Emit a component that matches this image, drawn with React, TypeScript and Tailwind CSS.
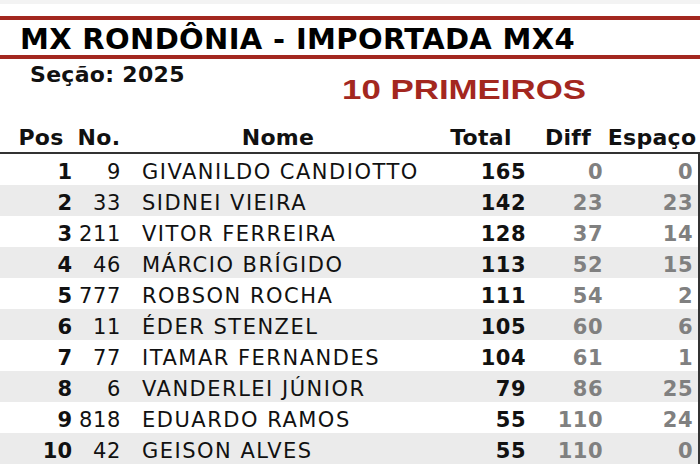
const rows = [
  { pos: 1, no: '9', nome: 'GIVANILDO CANDIOTTO', total: 165, diff: 0, esp: 0 },
  { pos: 2, no: '33', nome: 'SIDNEI VIEIRA', total: 142, diff: 23, esp: 23 },
  { pos: 3, no: '211', nome: 'VITOR FERREIRA', total: 128, diff: 37, esp: 14 },
  { pos: 4, no: '46', nome: 'MÁRCIO BRÍGIDO', total: 113, diff: 52, esp: 15 },
  { pos: 5, no: '777', nome: 'ROBSON ROCHA', total: 111, diff: 54, esp: 2 },
  { pos: 6, no: '11', nome: 'ÉDER STENZEL', total: 105, diff: 60, esp: 6 },
  { pos: 7, no: '77', nome: 'ITAMAR FERNANDES', total: 104, diff: 61, esp: 1 },
  { pos: 8, no: '6', nome: 'VANDERLEI JÚNIOR', total: 79, diff: 86, esp: 25 },
  { pos: 9, no: '818', nome: 'EDUARDO RAMOS', total: 55, diff: 110, esp: 24 },
  { pos: 10, no: '42', nome: 'GEISON ALVES', total: 55, diff: 110, esp: 0 },
]

const cols = 'grid grid-cols-[66px_50px_308px_98px_76px_92px] pl-[8px]'

export default function App() {
  return (
    <div className="h-[467px] w-[700px] overflow-hidden bg-white font-['DejaVu_Sans',Verdana,sans-serif] text-[#111]">
      <div className="h-[4px] bg-[#f3f3f3]" />

      <div className="mt-[12px] h-[43px] border-y-4 border-[#a3271f]">
        <h1 className="pl-[20px] pt-[2px] text-[29px] font-bold leading-[35px] tracking-[0.35px] text-black">
          MX RONDÔNIA - IMPORTADA MX4
        </h1>
      </div>

      <div className="flex h-[61px]">
        <p className="w-[342px] pl-[30px] pt-[3px] text-[22px] font-bold leading-[26px] tracking-[0.3px]">Seção: 2025</p>
        <p className="origin-left scale-x-[1.245] pt-[14px] font-['Liberation_Sans',Arial,sans-serif] text-[28px] font-bold leading-[34px] text-[#a3271f]">
          10 PRIMEIROS
        </p>
      </div>

      <div className={`${cols} h-[32px] items-center pt-[4px] text-[22px] font-bold leading-none tracking-[0.3px]`}>
        <span className="text-center">Pos</span>
        <span className="text-center">No.</span>
        <span className="text-center">Nome</span>
        <span className="text-center">Total</span>
        <span className="text-center">Diff</span>
        <span className="text-center">Espaço</span>
      </div>

      <div className="border-t-2 border-r-2 border-[#333]">
        {rows.map((r, i) => (
          <div
            key={r.pos}
            className={`${cols} h-[31px] items-center pt-[5px] text-[21px] leading-none ${i % 2 ? 'bg-[#ebebeb]' : 'bg-white'}`}
          >
            <span className="pr-[2px] text-right font-bold">{r.pos}</span>
            <span className="pr-[3px] text-right tracking-[0.6px]">{r.no}</span>
            <span className="pl-[18px] tracking-[1.5px]">{r.nome}</span>
            <span className="pr-[4px] text-right font-bold tracking-[0.5px]">{r.total}</span>
            <span className="pr-[3px] text-right font-bold tracking-[0.5px] text-[#808080]">{r.diff}</span>
            <span className="pr-[5px] text-right font-bold tracking-[0.5px] text-[#808080]">{r.esp}</span>
          </div>
        ))}
      </div>
    </div>
  )
}
